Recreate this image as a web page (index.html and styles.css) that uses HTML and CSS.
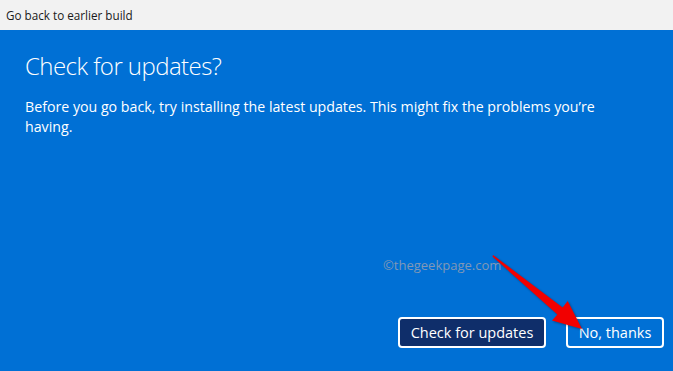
FILE: index.html
```html
<!doctype html>
<html lang="en">
 <head>
  <meta charset="UTF-8">
  <title>Go back to earlier build</title>
  <link rel="stylesheet" href="styles.css">
 </head>
 <body>
  <div class="window">
    <div class="titlebar">Go back to earlier build</div>

    <div class="content">
      <h1 class="heading">Check for updates?</h1>
      <p class="desc">Before you go back, try installing the latest updates. This might fix the problems you’re having.</p>
    </div>

    <div class="actions">
      <button class="btn btn-primary">Check for updates</button>
      <button class="btn btn-plain">No, thanks</button>
    </div>

    <!-- watermark + arrow on top of the screenshot -->
    <span class="watermark">©thegeekpage.com</span>
    <svg class="arrow" width="673" height="371" viewBox="0 0 673 371">
      <polygon fill="#f20000" points="493,255 562.6,307.5 567.7,301 582,329 552,320.5 557.4,314.5 492.5,256.5"/>
    </svg>
  </div>
 </body>
</html>
```

FILE: styles.css
```css
/* reset */
*{margin:0;padding:0;box-sizing:border-box}

html,body{
	width:673px;
	height:371px;
	overflow:hidden;
}

body{
	font-family:"Open Sans","Noto Sans","Liberation Sans",sans-serif;
}

.window{
	position:relative;
	width:673px;
	height:371px;
	display:flex;
	flex-direction:column;
	background-color:#0070d5;
	color:#fff;
}

.titlebar{
	height:30px;
	line-height:30px;
	padding-left:6px;
	background-color:#f2f2f2;
	color:#1a1a1a;
	font-size:11.7px;
}

.content{
	flex:1;
	padding:19px 25px 0 25px;
}

.heading{
	font-size:24px;
	font-weight:300;
	letter-spacing:-0.55px;
	line-height:34px;
}

.desc{
	margin-top:14px;
	font-size:14.2px;
	line-height:20px;
	width:600px;
}

.actions{
	display:flex;
	justify-content:flex-end;
	gap:20px;
	padding:0 9px 23px 0;
}

.btn{
	height:31px;
	padding:0;
	border:2px solid #fff;
	border-radius:4px;
	background-color:transparent;
	color:#fff;
	font-family:inherit;
	font-size:14.5px;
	white-space:nowrap;
}
.btn-primary{
	width:148px;
	background-color:#0f2e6a;
}
.btn-plain{
	width:98px;
}

/* overlays */
.watermark{
	position:absolute;
	left:383px;
	top:256px;
	font-size:13px;
	color:#8198b6;
}

.arrow{
	position:absolute;
	left:0;
	top:0;
	pointer-events:none;
	filter:drop-shadow(1px 1px 1px rgba(0,0,0,0.35));
}
```
